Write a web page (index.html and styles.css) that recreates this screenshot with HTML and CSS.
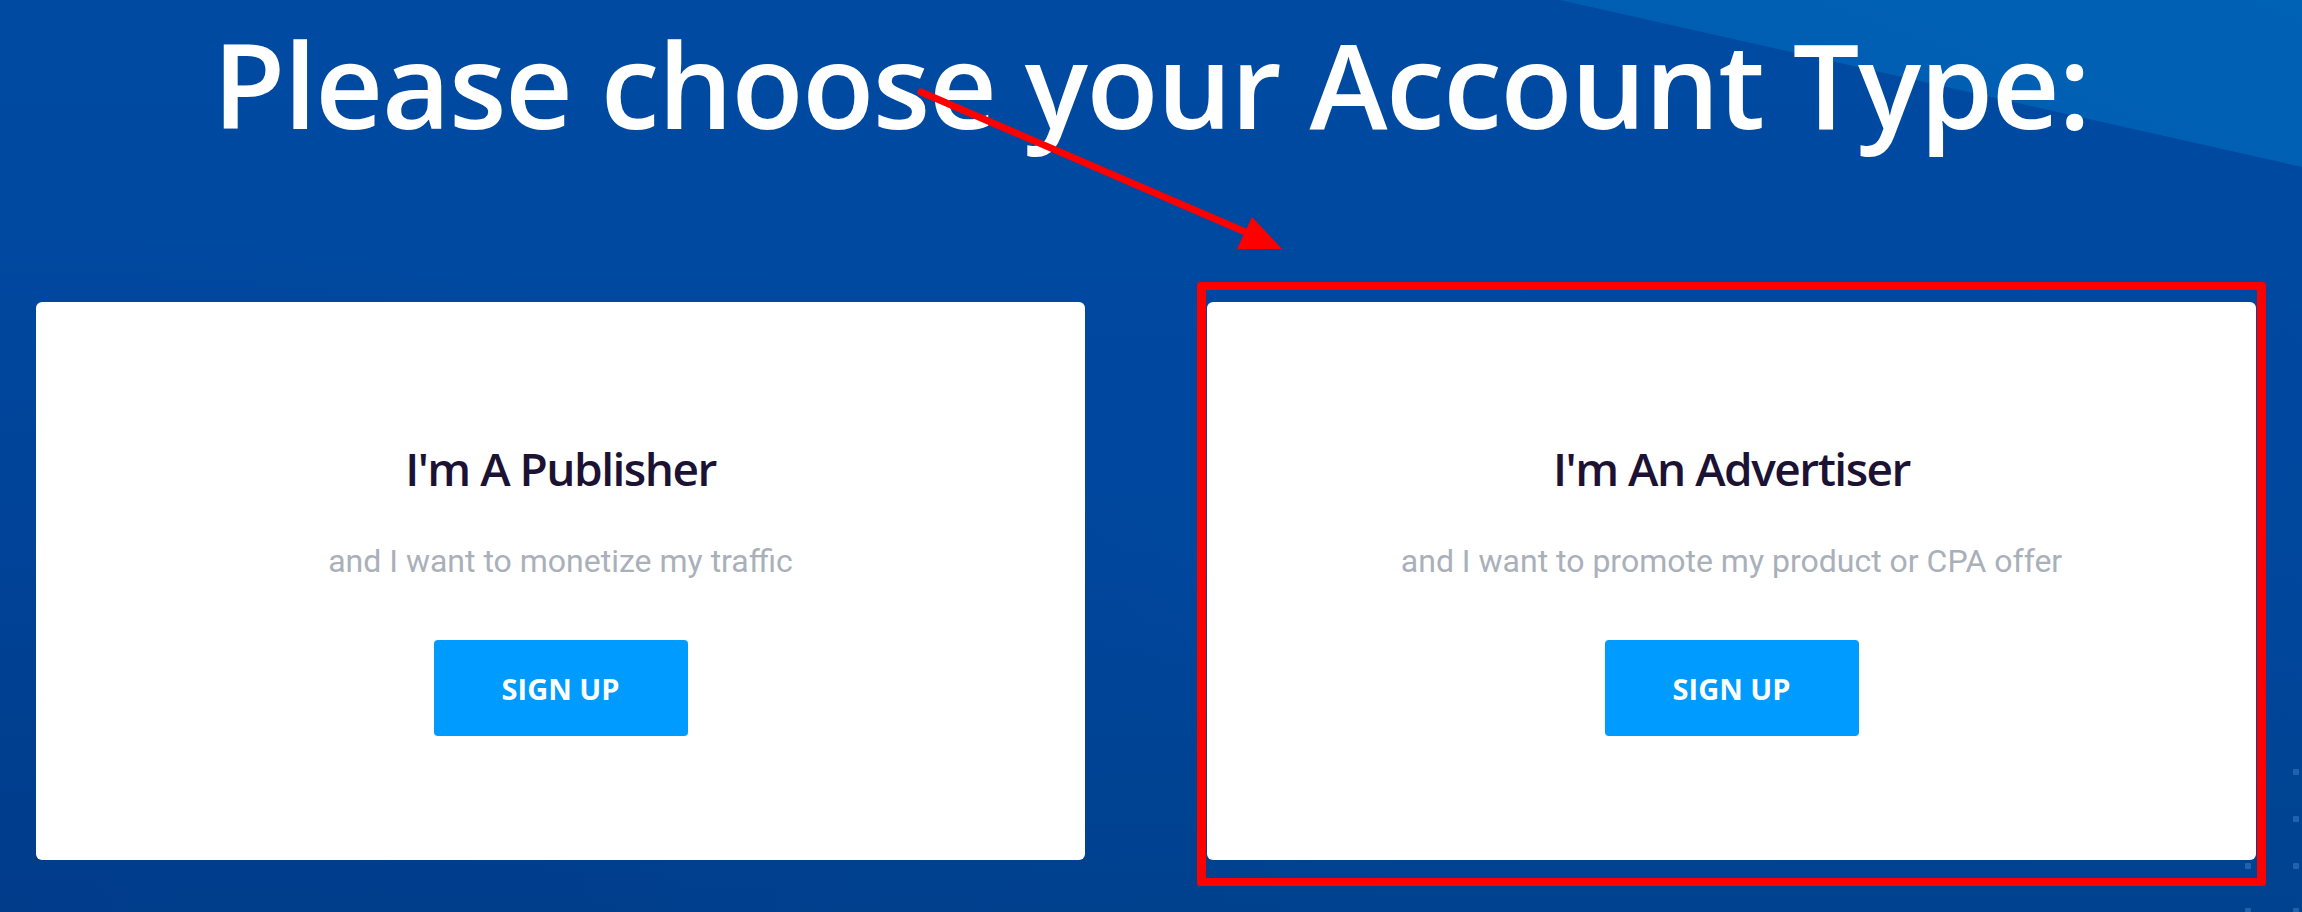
FILE: index.html
```html
<!DOCTYPE html>
<html lang="en">
<head>
<meta charset="utf-8">
<title>Choose Account Type</title>
<link rel="stylesheet" href="styles.css">
</head>
<body>
<main class="page">
  <h1 class="heading">Please choose your Account Type:</h1>
  <div class="cards">
    <section class="card">
      <h2 class="card-title">I'm A Publisher</h2>
      <p class="card-text">and I want to monetize my traffic</p>
      <a class="btn" href="#">SIGN UP</a>
    </section>
    <section class="card">
      <h2 class="card-title">I'm An Advertiser</h2>
      <p class="card-text">and I want to promote my product or CPA offer</p>
      <a class="btn" href="#">SIGN UP</a>
    </section>
  </div>
  <div class="highlight"></div>
  <svg class="arrow" width="2302" height="912" viewBox="0 0 2302 912">
    <line x1="921" y1="92" x2="1250" y2="234" stroke="#ff0000" stroke-width="7" stroke-linecap="round"/>
    <polygon points="1282,249 1237,249 1252,217" fill="#ff0000"/>
  </svg>
  <svg class="dots" width="2302" height="912" viewBox="0 0 2302 912">
    <g fill="#3d7cc4" fill-opacity="0.55">
      <rect x="2293" y="769" width="6" height="6" rx="1"/>
      <rect x="2293" y="816" width="6" height="6" rx="1"/>
      <rect x="2293" y="863" width="6" height="6" rx="1"/>
      <rect x="2293" y="908" width="6" height="6" rx="1"/>
      <rect x="2245" y="863" width="6" height="6" rx="1"/>
      <rect x="2245" y="908" width="6" height="6" rx="1"/>
    </g>
  </svg>
</main>
</body>
</html>
```

FILE: styles.css
```css
* { box-sizing: border-box; }
html, body { margin: 0; padding: 0; }
body {
  width: 2302px;
  height: 912px;
  overflow: hidden;
  background: #0049a0;
}
.page {
  position: relative;
  width: 2302px;
  height: 912px;
  background:
    radial-gradient(ellipse 1400px 700px at 0% 100%, rgba(0, 55, 135, 0.55), rgba(0, 55, 135, 0) 100%),
    linear-gradient(to bottom, #004aa1 0%, #00479e 60%, #00428f 100%);
  overflow: hidden;
}
.page::before {
  content: "";
  position: absolute;
  inset: 0;
  background: linear-gradient(200deg, #0062b4 0%, #0058ae 40%, #0051a8 100%);
  clip-path: polygon(1560px 0, 100% 0, 100% 167px);
}
.heading {
  position: relative;
  margin: 0;
  padding-top: 25px;
  font-family: "Open Sans", "Noto Sans", sans-serif;
  font-weight: 600;
  font-size: 118px;
  line-height: 118px;
  letter-spacing: -1.4px;
  color: #ffffff;
  text-align: center;
}
.cards {
  position: relative;
  display: flex;
  gap: 122px;
  padding-left: 36px;
  margin-top: 159px;
}
.card {
  width: 1049px;
  height: 558px;
  background: #ffffff;
  border-radius: 6px;
  padding-top: 143px;
  display: flex;
  flex-direction: column;
  align-items: center;
}
.card-title {
  margin: 0;
  font-family: "Open Sans", "Noto Sans", sans-serif;
  font-weight: 600;
  font-size: 46px;
  line-height: 46px;
  letter-spacing: -1.5px;
  color: #1c1233;
}
.card-text {
  margin: 54px 0 0;
  font-family: Roboto, "Liberation Sans", sans-serif;
  font-weight: 400;
  font-size: 32px;
  line-height: 32px;
  color: #a9b0ba;
}
.btn {
  margin-top: 63px;
  width: 254px;
  height: 96px;
  display: flex;
  align-items: center;
  justify-content: center;
  background: #009bff;
  border-radius: 4px;
  font-family: "Open Sans", "Noto Sans", sans-serif;
  font-weight: 700;
  font-size: 29px;
  color: #ffffff;
  text-decoration: none;
}
.highlight {
  position: absolute;
  left: 1197px;
  top: 282px;
  width: 1069px;
  height: 604px;
  border: 8px solid #ff0000;
  border-left-width: 9px;
  border-right-width: 9px;
  border-radius: 3px;
  pointer-events: none;
}
.arrow, .dots {
  position: absolute;
  left: 0;
  top: 0;
  pointer-events: none;
}
```
